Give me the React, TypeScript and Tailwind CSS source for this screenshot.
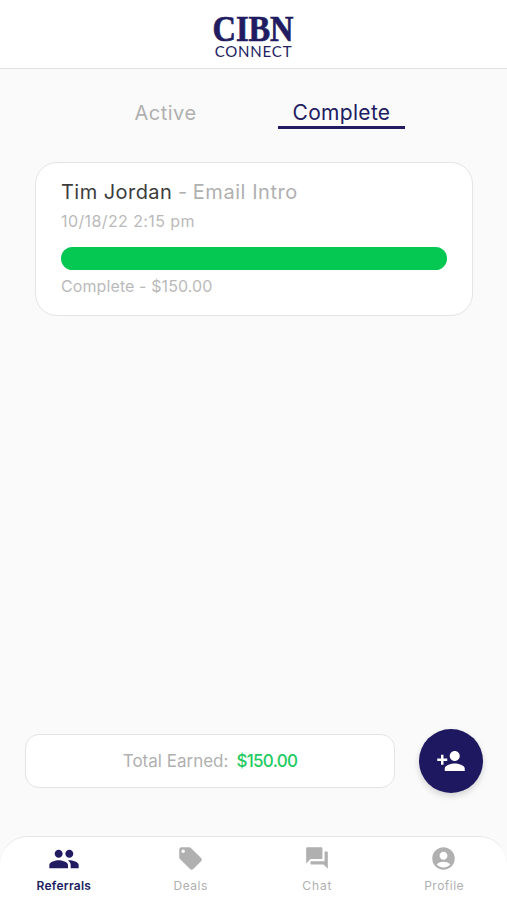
import { MdAccountCircle, MdForum, MdLocalOffer, MdPeople, MdPersonAdd } from "react-icons/md";

const referrals = [
  { name: "Tim Jordan", type: "Email Intro", date: "10/18/22 2:15 pm", status: "Complete", amount: "$150.00", progress: 100 },
];

const navItems = [
  { icon: <MdPeople className="mt-0.5 h-8 w-8" />, label: "Referrals", active: true, spacing: "tracking-[0.25px]" },
  { icon: <MdLocalOffer className="h-[27px] w-[27px]" />, label: "Deals", active: false, spacing: "tracking-[0.5px]" },
  { icon: <MdForum className="h-[26px] w-[26px]" />, label: "Chat", active: false, spacing: "tracking-[0.9px]" },
  { icon: <MdAccountCircle className="mr-0.5 h-[27px] w-[27px]" />, label: "Profile", active: false, spacing: "tracking-[0.5px]" },
];

const Header = () => (
  <header className="flex h-[69px] shrink-0 flex-col items-center border-b border-[#e2e2e2] bg-white pt-[13px] text-[#211c61]">
    <span className="h-8 scale-x-[0.9] font-['Liberation_Serif',serif] text-[36px] leading-8 font-bold whitespace-nowrap [-webkit-text-stroke:0.7px]">CIBN</span>
    <span className="font-[Lato,sans-serif] text-[15px] leading-[13px] tracking-[0.8px] whitespace-nowrap">CONNECT</span>
  </header>
);

const Tabs = () => (
  <div className="flex pt-[31px] pl-[102px]">
    <button className="h-[29px] w-[127px] pb-[3px] text-xl leading-6 tracking-[0.5px] text-[#b0b0b0]">Active</button>
    <button className="ml-[49px] h-[29px] w-[127px] border-b-[3px] border-[#211c61] text-[21px] leading-6 tracking-[0.3px] text-[#211c61]">
      Complete
    </button>
  </div>
);

const App = () => {
  return (
    <div className="flex h-[900px] w-[507px] flex-col overflow-hidden bg-[#fafafa] font-[Inter,sans-serif]">
      <Header />
      <Tabs />

      <main className="flex-1 px-[35px] pt-[33px]">
        {referrals.map((referral, index) => (
          <div key={index} className="h-[154px] w-[438px] rounded-[22px] border border-[#e4e4e4] bg-white px-[25px] pt-[17px]">
            <h2 className="text-xl leading-6 tracking-[0.55px] whitespace-nowrap text-[#b0b0b0]">
              <span className="tracking-[0.45px] text-[#3c3c3c]">{referral.name}</span>
              <span className="tracking-normal"> - </span>
              {referral.type}
            </h2>
            <p className="mt-[7px] text-base leading-5 tracking-[0.4px] text-[#bababa]">{referral.date}</p>
            <div className="mt-4 h-[23px] rounded-full bg-[#e5e5e5]">
              <div className="h-full rounded-full bg-[#04c851]" style={{ width: `${referral.progress}%` }} />
            </div>
            <p className="mt-[6px] text-base leading-5 tracking-[0.1px] text-[#bababa]">
              {referral.status} - {referral.amount}
            </p>
          </div>
        ))}
      </main>

      <div className="mb-[43px] flex items-center gap-6 pl-[25px]">
        <div className="flex h-[54px] w-[370px] items-center justify-center gap-2 rounded-[14px] border border-[#e4e4e4] bg-white pt-0.5 text-[17px] whitespace-nowrap">
          <span className="text-[#b0b0b0]">Total Earned:</span>
          <span className="font-medium tracking-[-0.7px] text-[#1fcb62]">$150.00</span>
        </div>
        <button aria-label="Add referral" className="flex h-16 w-16 items-center justify-center rounded-full bg-[#1d185f] text-white shadow-[0_3px_6px_rgba(0,0,0,0.16)]">
          <MdPersonAdd className="h-[30px] w-[30px]" />
        </button>
      </div>

      <nav className="flex h-[64px] shrink-0 rounded-t-[28px] border-t border-[#e6e6e6] bg-white">
        {navItems.map((item) => (
          <button
            key={item.label}
            className={`flex flex-1 flex-col items-center pt-px pl-px text-[12px] leading-4 ${item.spacing} ${item.active ? "font-semibold text-[#211c61]" : "text-[#b0b0b0]"}`}
          >
            <span className="mt-1 mb-1 flex h-8 items-center">{item.icon}</span>
            {item.label}
          </button>
        ))}
      </nav>
    </div>
  );
};

export default App;
